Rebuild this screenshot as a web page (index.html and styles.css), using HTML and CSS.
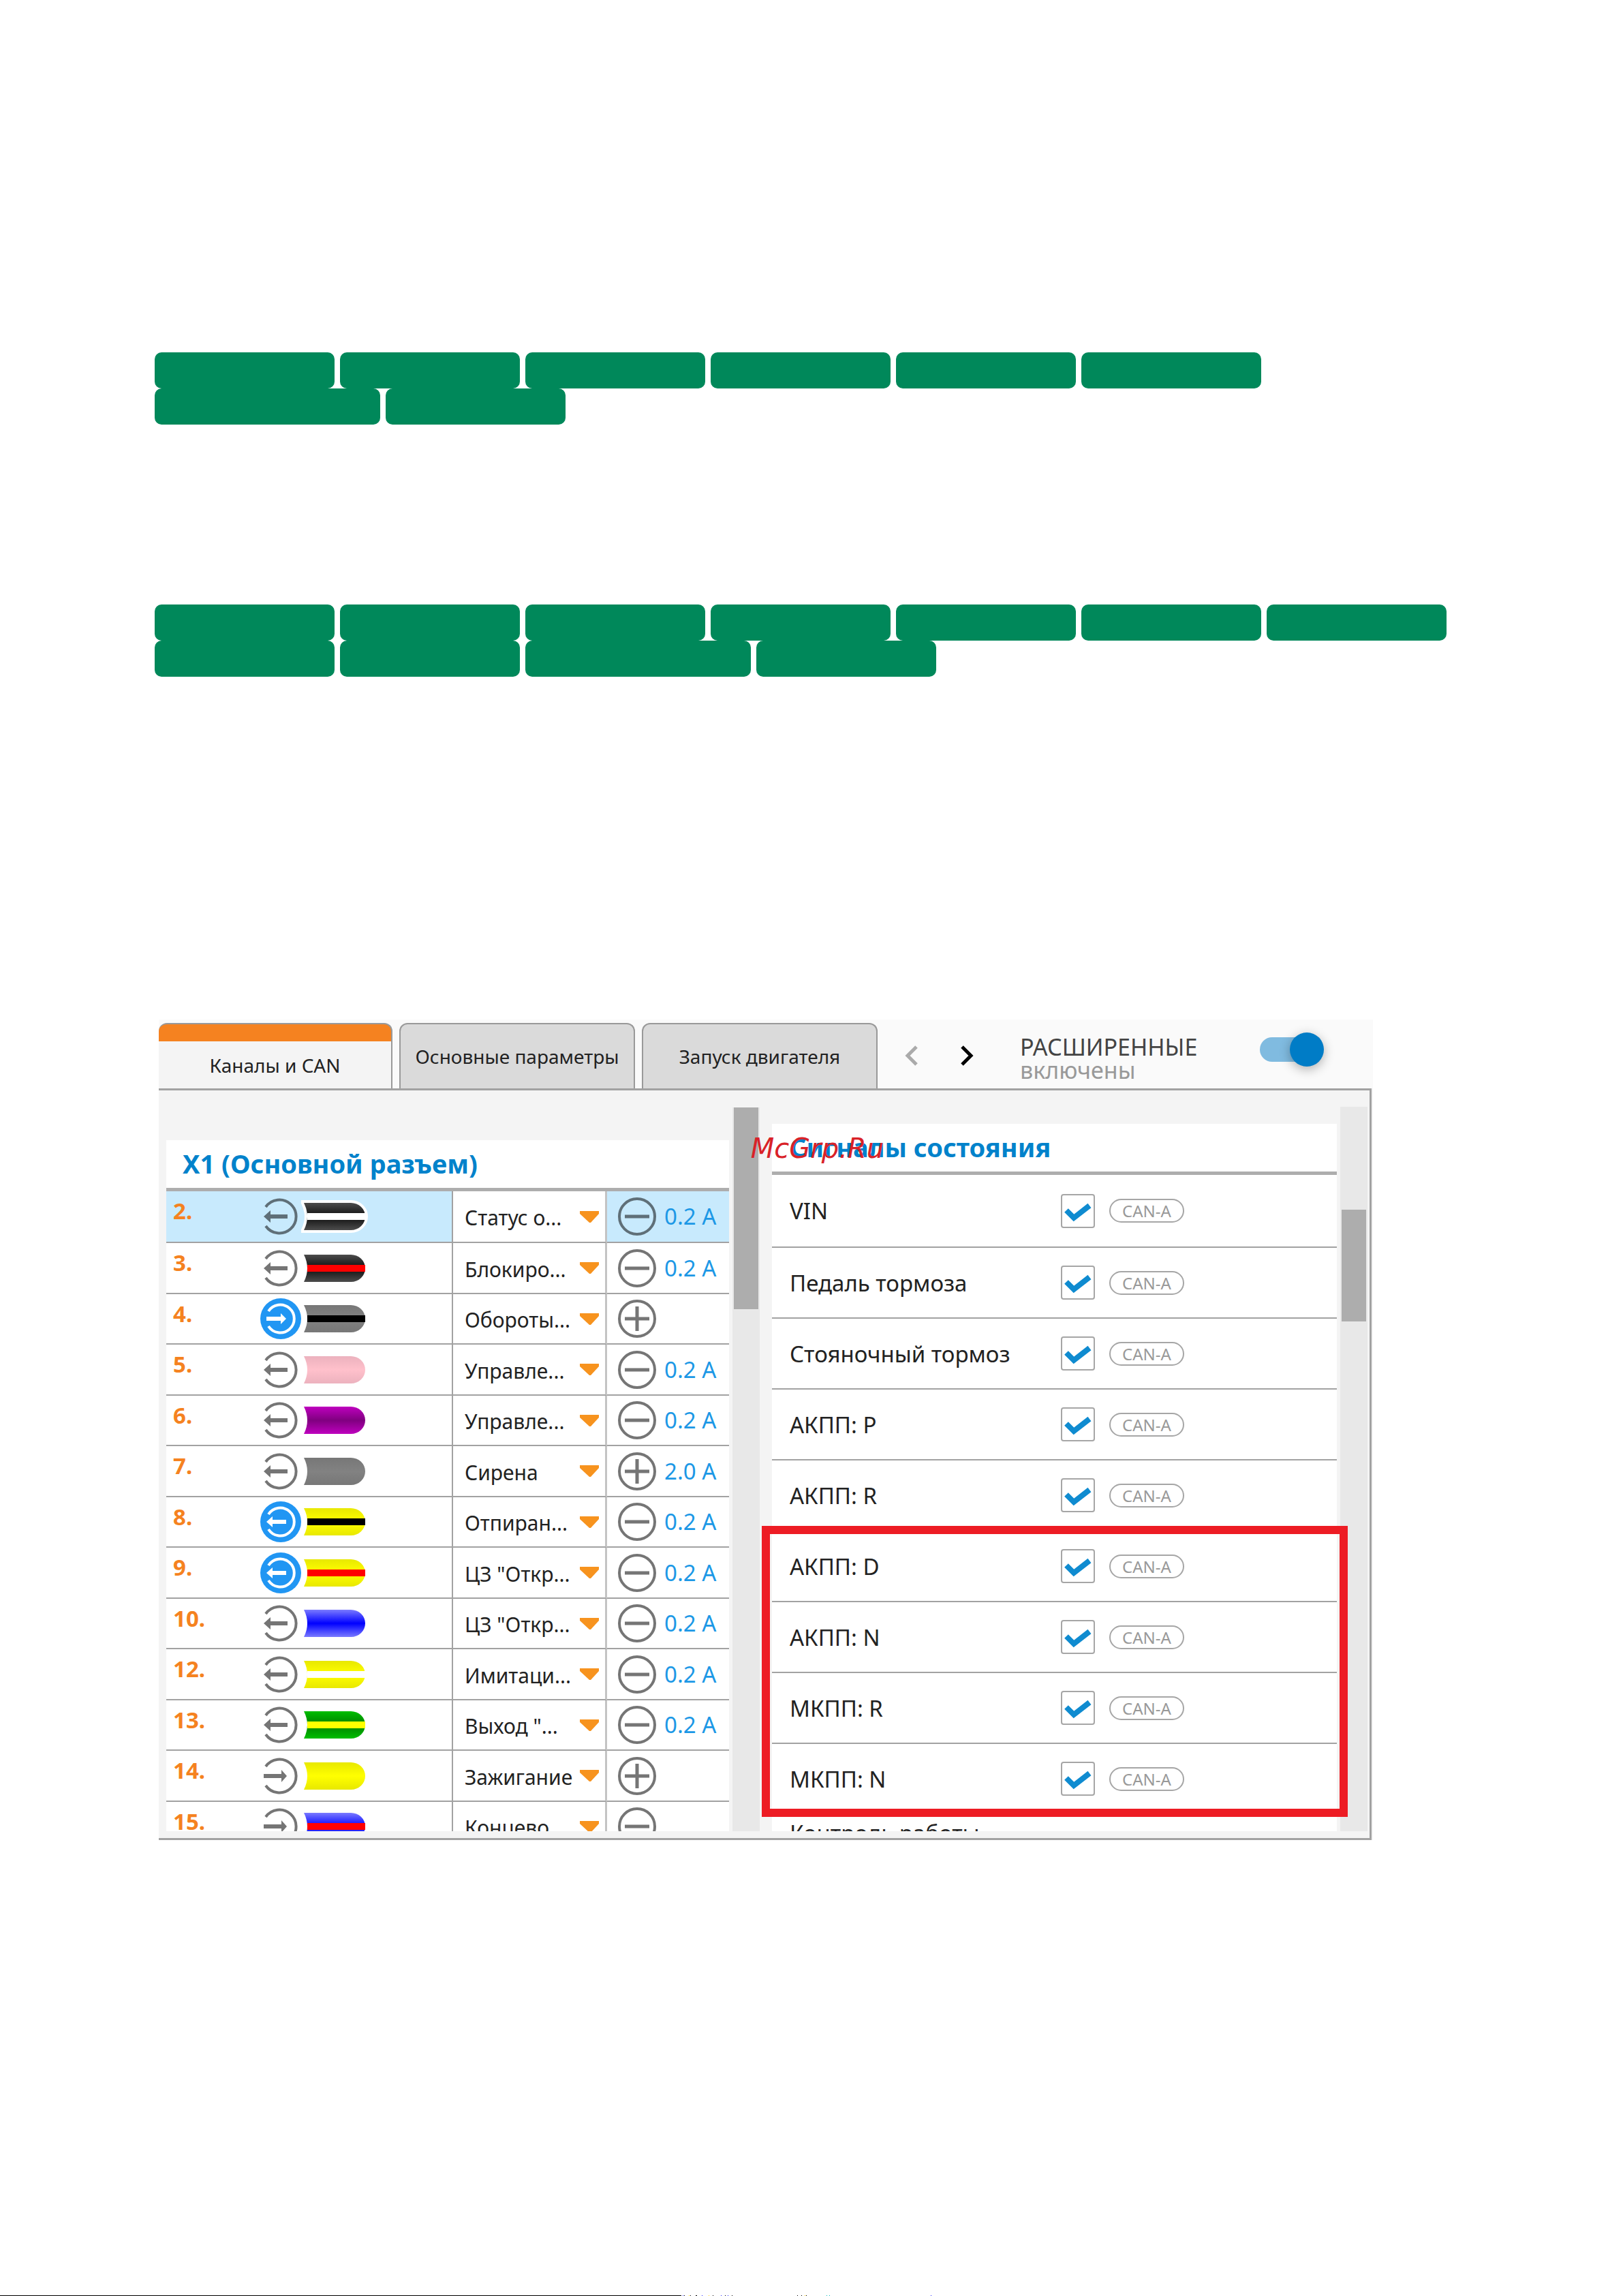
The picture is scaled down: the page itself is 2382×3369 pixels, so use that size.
FILE: index.html
```html
<!DOCTYPE html>
<html lang="ru">
<head>
<meta charset="utf-8">
<meta name="viewport" content="width=device-width, initial-scale=1">
<title>Каналы и CAN</title>
<link rel="stylesheet" href="styles.css">
</head>
<body>
<svg class="defs" width="0" height="0" aria-hidden="true">
  <defs>
    <linearGradient id="black" x1="0" y1="0" x2="0" y2="1"><stop offset="0" stop-color="#4c4c4c"/><stop offset=".4" stop-color="#1a1a1a"/><stop offset=".6" stop-color="#1a1a1a"/><stop offset="1" stop-color="#4c4c4c"/></linearGradient>
    <linearGradient id="grey" x1="0" y1="0" x2="0" y2="1"><stop offset="0" stop-color="#777"/><stop offset=".5" stop-color="#828282"/><stop offset="1" stop-color="#777"/></linearGradient>
    <linearGradient id="pink" x1="0" y1="0" x2="0" y2="1"><stop offset="0" stop-color="#ecb2be"/><stop offset=".5" stop-color="#ffc0cb"/><stop offset="1" stop-color="#ecb2be"/></linearGradient>
    <linearGradient id="violet" x1="0" y1="0" x2="0" y2="1"><stop offset="0" stop-color="#be00be"/><stop offset=".5" stop-color="#800080"/><stop offset="1" stop-color="#be00be"/></linearGradient>
    <linearGradient id="yellow" x1="0" y1="0" x2="0" y2="1"><stop offset="0" stop-color="#e8e800"/><stop offset=".5" stop-color="#ffff00"/><stop offset="1" stop-color="#e8e800"/></linearGradient>
    <linearGradient id="blue" x1="0" y1="0" x2="0" y2="1"><stop offset="0" stop-color="#7a7aff"/><stop offset=".5" stop-color="#0000ff"/><stop offset="1" stop-color="#7a7aff"/></linearGradient>
    <linearGradient id="green" x1="0" y1="0" x2="0" y2="1"><stop offset="0" stop-color="#00be00"/><stop offset=".5" stop-color="#008000"/><stop offset="1" stop-color="#00be00"/></linearGradient>
    <path id="wire" d="M4 4H73A21 20 0 0 1 73 44H4Q14 24 4 4Z"/>
    <path id="stripe" d="M9 19H94V29H9Z"/>
    <g id="out">
      <path d="M8 16A24.500 24.500 0 1 1 8 44" fill="none" stroke="currentColor" stroke-width="4"/>
      <path d="M5 30L15 21V27H40V33H15V39Z" fill="currentColor"/>
    </g>
    <g id="in">
      <path d="M8 16A24.500 24.500 0 1 1 8 44" fill="none" stroke="currentColor" stroke-width="4"/>
      <path d="M5 27H31V21L39 30L31 39V33H5Z" fill="currentColor"/>
    </g>
    <g id="out-on">
      <circle cx="30" cy="30" r="30" fill="#2196f3"/>
      <path d="M12 19A20.500 20.500 0 1 1 12 41" fill="none" stroke="#fff" stroke-width="4"/>
      <path d="M9 30L18 22V27H38V33H18V38Z" fill="#fff"/>
    </g>
    <g id="in-on">
      <circle cx="30" cy="30" r="30" fill="#2196f3"/>
      <path d="M12 19A20.500 20.500 0 1 1 12 41" fill="none" stroke="#fff" stroke-width="4"/>
      <path d="M9 27H30V22L38 30L30 38V33H9Z" fill="#fff"/>
    </g>
    <g id="minus" fill="none" stroke="currentColor">
      <circle cx="28" cy="28" r="26" stroke-width="4"/>
      <path d="M10 28H46" stroke-width="5"/>
    </g>
    <g id="plus" fill="none" stroke="currentColor">
      <circle cx="28" cy="28" r="26" stroke-width="4"/>
      <path d="M10 28H46M28 10V46" stroke-width="5"/>
    </g>
    <path id="caret" d="M0 0H28V4L16 17H14L0 4Z" fill="#f7931e"/>
  </defs>
</svg>

<main class="page">
  <div class="pills">
    <span class="pill"></span><span class="pill"></span><span class="pill"></span><span class="pill"></span><span class="pill"></span><span class="pill"></span><span class="pill pill-wide"></span><span class="pill"></span>
  </div>
  <div class="pills">
    <span class="pill"></span><span class="pill"></span><span class="pill"></span><span class="pill"></span><span class="pill"></span><span class="pill"></span><span class="pill"></span><span class="pill"></span><span class="pill"></span><span class="pill pill-wide"></span><span class="pill"></span>
  </div>

  <section class="app">
    <header class="topbar">
      <nav class="tabs">
        <button class="tab tab-active" type="button">Каналы и CAN</button>
        <button class="tab" type="button">Основные параметры</button>
        <button class="tab" type="button">Запуск двигателя</button>
      </nav>
      <div class="pager">
        <button class="arrow arrow-off" type="button" aria-label="Назад"><svg width="20" height="30" viewBox="0 0 20 30"><path d="M17 2L4 15L17 28" fill="none" stroke="currentColor" stroke-width="5"/></svg></button>
        <button class="arrow" type="button" aria-label="Вперёд"><svg width="20" height="30" viewBox="0 0 20 30"><path d="M3 2L16 15L3 28" fill="none" stroke="currentColor" stroke-width="5"/></svg></button>
      </div>
      <label class="mode" for="advanced"><span class="mode-name">РАСШИРЕННЫЕ</span><span class="mode-state">включены</span></label>
      <input class="toggle" id="advanced" type="checkbox" checked>
    </header>

    <div class="panes">
      <section class="pane pane-left">
        <h2 class="title">X1 (Основной разъем)</h2>
        <table class="channels">
          <colgroup><col class="c-num"><col><col class="c-sel"><col class="c-amp"></colgroup>
          <tbody>
          <tr class="selected"><td class="num">2.</td><td><div class="line"><svg class="dir" viewBox="0 0 60 60"><use href="#out"/></svg><svg class="wire" viewBox="0 0 98 48"><use href="#wire" fill="#fff" stroke="#fff" stroke-width="8"/><use href="#wire" fill="url(#black)"/><use href="#stripe" fill="#fff"/></svg></div></td><td class="sel"><div class="line"><select class="fn" aria-label="Канал 2"><option>Статус о...</option></select><svg class="caret" viewBox="0 0 28 17"><use href="#caret"/></svg></div></td><td class="amp"><div class="line"><svg class="pol" viewBox="0 0 56 56"><use href="#minus"/></svg>0.2 A</div></td></tr>
          <tr><td class="num">3.</td><td><div class="line"><svg class="dir" viewBox="0 0 60 60"><use href="#out"/></svg><svg class="wire" viewBox="0 0 98 48"><use href="#wire" fill="url(#black)"/><use href="#stripe" fill="#f00"/></svg></div></td><td class="sel"><div class="line"><select class="fn" aria-label="Канал 3"><option>Блокиро...</option></select><svg class="caret" viewBox="0 0 28 17"><use href="#caret"/></svg></div></td><td class="amp"><div class="line"><svg class="pol" viewBox="0 0 56 56"><use href="#minus"/></svg>0.2 A</div></td></tr>
          <tr><td class="num">4.</td><td><div class="line"><svg class="dir" viewBox="0 0 60 60"><use href="#in-on"/></svg><svg class="wire" viewBox="0 0 98 48"><use href="#wire" fill="url(#grey)"/><use href="#stripe" fill="#000"/></svg></div></td><td class="sel"><div class="line"><select class="fn" aria-label="Канал 4"><option>Обороты...</option></select><svg class="caret" viewBox="0 0 28 17"><use href="#caret"/></svg></div></td><td class="amp"><div class="line"><svg class="pol" viewBox="0 0 56 56"><use href="#plus"/></svg></div></td></tr>
          <tr><td class="num">5.</td><td><div class="line"><svg class="dir" viewBox="0 0 60 60"><use href="#out"/></svg><svg class="wire" viewBox="0 0 98 48"><use href="#wire" fill="url(#pink)"/></svg></div></td><td class="sel"><div class="line"><select class="fn" aria-label="Канал 5"><option>Управле...</option></select><svg class="caret" viewBox="0 0 28 17"><use href="#caret"/></svg></div></td><td class="amp"><div class="line"><svg class="pol" viewBox="0 0 56 56"><use href="#minus"/></svg>0.2 A</div></td></tr>
          <tr><td class="num">6.</td><td><div class="line"><svg class="dir" viewBox="0 0 60 60"><use href="#out"/></svg><svg class="wire" viewBox="0 0 98 48"><use href="#wire" fill="url(#violet)"/></svg></div></td><td class="sel"><div class="line"><select class="fn" aria-label="Канал 6"><option>Управле...</option></select><svg class="caret" viewBox="0 0 28 17"><use href="#caret"/></svg></div></td><td class="amp"><div class="line"><svg class="pol" viewBox="0 0 56 56"><use href="#minus"/></svg>0.2 A</div></td></tr>
          <tr><td class="num">7.</td><td><div class="line"><svg class="dir" viewBox="0 0 60 60"><use href="#out"/></svg><svg class="wire" viewBox="0 0 98 48"><use href="#wire" fill="url(#grey)"/></svg></div></td><td class="sel"><div class="line"><select class="fn" aria-label="Канал 7"><option>Сирена</option></select><svg class="caret" viewBox="0 0 28 17"><use href="#caret"/></svg></div></td><td class="amp"><div class="line"><svg class="pol" viewBox="0 0 56 56"><use href="#plus"/></svg>2.0 A</div></td></tr>
          <tr><td class="num">8.</td><td><div class="line"><svg class="dir" viewBox="0 0 60 60"><use href="#out-on"/></svg><svg class="wire" viewBox="0 0 98 48"><use href="#wire" fill="url(#yellow)"/><use href="#stripe" fill="#000"/></svg></div></td><td class="sel"><div class="line"><select class="fn" aria-label="Канал 8"><option>Отпиран...</option></select><svg class="caret" viewBox="0 0 28 17"><use href="#caret"/></svg></div></td><td class="amp"><div class="line"><svg class="pol" viewBox="0 0 56 56"><use href="#minus"/></svg>0.2 A</div></td></tr>
          <tr><td class="num">9.</td><td><div class="line"><svg class="dir" viewBox="0 0 60 60"><use href="#out-on"/></svg><svg class="wire" viewBox="0 0 98 48"><use href="#wire" fill="url(#yellow)"/><use href="#stripe" fill="#f00"/></svg></div></td><td class="sel"><div class="line"><select class="fn" aria-label="Канал 9"><option>ЦЗ "Откр...</option></select><svg class="caret" viewBox="0 0 28 17"><use href="#caret"/></svg></div></td><td class="amp"><div class="line"><svg class="pol" viewBox="0 0 56 56"><use href="#minus"/></svg>0.2 A</div></td></tr>
          <tr><td class="num">10.</td><td><div class="line"><svg class="dir" viewBox="0 0 60 60"><use href="#out"/></svg><svg class="wire" viewBox="0 0 98 48"><use href="#wire" fill="url(#blue)"/></svg></div></td><td class="sel"><div class="line"><select class="fn" aria-label="Канал 10"><option>ЦЗ "Откр...</option></select><svg class="caret" viewBox="0 0 28 17"><use href="#caret"/></svg></div></td><td class="amp"><div class="line"><svg class="pol" viewBox="0 0 56 56"><use href="#minus"/></svg>0.2 A</div></td></tr>
          <tr><td class="num">12.</td><td><div class="line"><svg class="dir" viewBox="0 0 60 60"><use href="#out"/></svg><svg class="wire" viewBox="0 0 98 48"><use href="#wire" fill="url(#yellow)"/><use href="#stripe" fill="#fff"/></svg></div></td><td class="sel"><div class="line"><select class="fn" aria-label="Канал 12"><option>Имитаци...</option></select><svg class="caret" viewBox="0 0 28 17"><use href="#caret"/></svg></div></td><td class="amp"><div class="line"><svg class="pol" viewBox="0 0 56 56"><use href="#minus"/></svg>0.2 A</div></td></tr>
          <tr><td class="num">13.</td><td><div class="line"><svg class="dir" viewBox="0 0 60 60"><use href="#out"/></svg><svg class="wire" viewBox="0 0 98 48"><use href="#wire" fill="url(#green)"/><use href="#stripe" fill="#ff0"/></svg></div></td><td class="sel"><div class="line"><select class="fn" aria-label="Канал 13"><option>Выход "...</option></select><svg class="caret" viewBox="0 0 28 17"><use href="#caret"/></svg></div></td><td class="amp"><div class="line"><svg class="pol" viewBox="0 0 56 56"><use href="#minus"/></svg>0.2 A</div></td></tr>
          <tr><td class="num">14.</td><td><div class="line"><svg class="dir" viewBox="0 0 60 60"><use href="#in"/></svg><svg class="wire" viewBox="0 0 98 48"><use href="#wire" fill="url(#yellow)"/></svg></div></td><td class="sel"><div class="line"><select class="fn" aria-label="Канал 14"><option>Зажигание</option></select><svg class="caret" viewBox="0 0 28 17"><use href="#caret"/></svg></div></td><td class="amp"><div class="line"><svg class="pol" viewBox="0 0 56 56"><use href="#plus"/></svg></div></td></tr>
          <tr><td class="num">15.</td><td><div class="line"><svg class="dir" viewBox="0 0 60 60"><use href="#in"/></svg><svg class="wire" viewBox="0 0 98 48"><use href="#wire" fill="url(#blue)"/><use href="#stripe" fill="#f00"/></svg></div></td><td class="sel"><div class="line"><select class="fn" aria-label="Канал 15"><option>Концево</option></select><svg class="caret" viewBox="0 0 28 17"><use href="#caret"/></svg></div></td><td class="amp"><div class="line"><svg class="pol" viewBox="0 0 56 56"><use href="#minus"/></svg></div></td></tr>
          </tbody>
        </table>
      </section>
      <div class="scroll scroll-left"><div class="thumb"></div></div>

      <section class="pane pane-right">
        <h2 class="title">Сигналы состояния</h2>
        <ul class="signals">
          <li class="signal"><label class="name" for="s1">VIN</label><input class="check" id="s1" type="checkbox" checked><span class="bus">CAN-A</span></li>
          <li class="signal"><label class="name" for="s2">Педаль тормоза</label><input class="check" id="s2" type="checkbox" checked><span class="bus">CAN-A</span></li>
          <li class="signal"><label class="name" for="s3">Стояночный тормоз</label><input class="check" id="s3" type="checkbox" checked><span class="bus">CAN-A</span></li>
          <li class="signal"><label class="name" for="s4">АКПП: P</label><input class="check" id="s4" type="checkbox" checked><span class="bus">CAN-A</span></li>
          <li class="signal"><label class="name" for="s5">АКПП: R</label><input class="check" id="s5" type="checkbox" checked><span class="bus">CAN-A</span></li>
          <li class="signal"><label class="name" for="s6">АКПП: D</label><input class="check" id="s6" type="checkbox" checked><span class="bus">CAN-A</span></li>
          <li class="signal"><label class="name" for="s7">АКПП: N</label><input class="check" id="s7" type="checkbox" checked><span class="bus">CAN-A</span></li>
          <li class="signal"><label class="name" for="s8">МКПП: R</label><input class="check" id="s8" type="checkbox" checked><span class="bus">CAN-A</span></li>
          <li class="signal"><label class="name" for="s9">МКПП: N</label><input class="check" id="s9" type="checkbox" checked><span class="bus">CAN-A</span></li>
          <li class="signal signal-cut"><span class="name">Контроль работы</span></li>
        </ul>
      </section>
      <div class="scroll scroll-right"><div class="thumb"></div></div>
      <div class="highlight"></div>
      <span class="watermark">McGrp.Ru</span>
    </div>
  </section>
</main>
<footer class="rule">
  <span class="bar"></span>
  <svg width="370" height="1" viewBox="0 0 370 1" shape-rendering="crispEdges" aria-hidden="true"><path d="M4 0h1v1h-1zM13 0h1v1h-1zM21 0h2v1h-2zM46 0h1v1h-1zM64 0h1v1h-1zM74 0h1v1h-1zM170 0h1v1h-1zM176 0h1v1h-1zM183 0h1v1h-1z"/><path d="M2 0h1v1h-1zM30 0h1v1h-1zM58 0h1v1h-1zM68 0h1v1h-1zM366 0h1v1h-1z" fill="#22f"/><path d="M11 0h1v1h-1zM40 0h1v1h-1zM181 0h1v1h-1z" fill="#fc0"/><path d="M213 0h1v1h-1zM217 0h1v1h-1z" fill="#0bb"/></svg>
</footer>
</body>
</html>
```
FILE: styles.css
```css
* { box-sizing: border-box; }

body {
  margin: 0;
  min-height: 100vh;
  display: flex;
  flex-direction: column;
  background: #fff;
  color: #222;
  font-family: "Noto Sans", "Liberation Sans", sans-serif;
}

.defs { position: absolute; }

button, select, input { margin: 0; font: inherit; color: inherit; }

.page { padding: 517px 227px 0; }

.pills {
  display: flex;
  flex-wrap: wrap;
  column-gap: 8px;
  margin-bottom: 264px;
}
.pill { width: 264px; height: 53px; border-radius: 10px; background: #00885a; }
.pill-wide { width: 331px; }

/* application window */
.app { margin: 503px 140px 0 6px; background: #f4f4f4; }

.topbar {
  display: flex;
  height: 101px;
  padding-top: 5px;
  background: #fafafa;
}
.tabs { display: flex; gap: 10px; }
.tab {
  width: 346px;
  padding: 0;
  border: 2px solid #999;
  border-bottom: 0;
  border-radius: 12px 12px 0 0;
  background: #dadada;
  font-size: 28px;
  color: #222;
}
.tab-active {
  width: 343px;
  border-left: 0;
  padding-top: 25px;
  background: linear-gradient(#f58220 25px, #f4f4f4 25px);
}

.pager { display: flex; align-items: center; gap: 61px; margin-left: 40px; }
.arrow { display: flex; padding: 0; border: 0; background: none; color: #000; }
.arrow-off { color: #aaa; }

.mode { margin: 18px 0 0 68px; font-size: 34px; line-height: 34px; }
.mode-name { display: block; color: #444; }
.mode-state { display: block; color: #999; }

.toggle {
  appearance: none;
  position: relative;
  width: 94px;
  height: 50px;
  margin: 14px 72px 0 auto;
}
.toggle::before {
  content: "";
  position: absolute;
  inset: 7px 10px 7px 0;
  border-radius: 18px;
  background: #80bbe0;
}
.toggle::after {
  content: "";
  position: absolute;
  inset: 0 0 0 auto;
  width: 50px;
  border-radius: 50%;
  background: #007cc6;
  box-shadow: 0 4px 16px rgba(0, 0, 0, .3);
}

.panes {
  position: relative;
  display: grid;
  grid-template-columns: 832fr 40px 853fr 40px;
  height: 1103px;
  margin-right: 2px;
  padding: 0 3px 10px 11px;
  border: 3px solid #a2a2a2;
  border-left: 0;
}
.pane { overflow: hidden; }
.pane-left { padding-top: 73px; margin-right: 5px; }
.pane-right { padding-top: 49px; margin: 0 5px 0 18px; }

.title {
  height: 75px;
  margin: 0;
  border-bottom: 5px solid #adadad;
  background: #fff;
  font-size: 38px;
  line-height: 68px;
  color: #0082cb;
}
.pane-left .title { padding-left: 24px; }
.pane-right .title { padding-left: 26px; }

/* channel table */
.channels {
  width: 100%;
  table-layout: fixed;
  border-collapse: separate;
  border-spacing: 0;
  background: #fff;
  font-size: 33px;
  line-height: 40px;
}
.c-num { width: 138px; }
.c-sel { width: 228px; }
.c-amp { width: 179px; }
.channels tr { height: 74px; }
.channels tr:nth-child(even) { height: 75px; }
.channels tr:first-child { height: 76px; }
.channels td { padding: 0; border-bottom: 2px solid #a2a2a2; }
.channels .selected { background: #c8eafd; }
.channels .num { padding: 9px 0 0 10px; vertical-align: top; font-weight: 700; color: #f58220; }
.channels .sel { padding: 0 9px 0 17px; border-left: 2px solid #a2a2a2; border-right: 3px solid #c4c4c4; background: #fff; }
.channels .amp { padding-left: 16px; color: #1c98e6; }
.line { display: flex; align-items: center; }
.dir { flex: none; width: 60px; height: 60px; color: #757575; }
.wire { flex: none; width: 98px; height: 48px; }
.pol { flex: none; width: 56px; height: 56px; margin-right: 12px; color: #757575; }
.selected .dir, .selected .pol { color: #5f6f78; }
.caret { flex: none; width: 28px; height: 17px; }
.fn {
  flex: 1;
  min-width: 0;
  height: 48px;
  padding: 4px 0 0;
  border: 0;
  appearance: none;
  background: none;
  font-size: 30px;
  line-height: 44px;
  color: #222;
}

/* scrollbars */
.scroll { padding: 0 2px; background: #e8e8e8; }
.scroll-left { margin-top: 25px; }
.scroll-right { margin-top: 24px; padding-top: 151px; }
.thumb { height: 296px; background: #adadad; }
.scroll-right .thumb { height: 164px; }

/* signal list */
.signals { margin: 0; padding: 0; list-style: none; background: #fff; font-size: 33px; }
.signal {
  display: grid;
  grid-template-columns: 1fr 50px 110px;
  column-gap: 21px;
  align-items: center;
  height: 104px;
  padding: 0 224px 0 26px;
  border-bottom: 2px solid #a2a2a2;
}
.signal:first-child { height: 107px; }
.signal-cut { align-items: start; padding-top: 4px; }
.check {
  appearance: none;
  width: 50px;
  height: 50px;
  border: 2px solid #a6a6a6;
  border-radius: 4px;
}
.check:checked {
  background: url("data:image/svg+xml,%3Csvg xmlns='http://www.w3.org/2000/svg' viewBox='0 0 46 46'%3E%3Cpath d='M6 22L17 33L40 15' fill='none' stroke='%230f8bd0' stroke-width='8'/%3E%3C/svg%3E");
}
.bus {
  height: 35px;
  border: 2px solid #a6a6a6;
  border-radius: 18px;
  font-size: 24px;
  line-height: 31px;
  text-align: center;
  color: #999;
}

/* overlays */
.highlight {
  position: absolute;
  top: 639px;
  right: 32px;
  width: 860px;
  height: 427px;
  border: 12px solid #ed1c24;
}
.watermark {
  position: absolute;
  top: 62px;
  right: 713px;
  font: italic 40px/46px "DejaVu Sans", sans-serif;
  color: #d92228;
}

.rule { display: flex; height: 1px; margin-top: auto; }
.bar { width: 42%; background: #000; }
```
